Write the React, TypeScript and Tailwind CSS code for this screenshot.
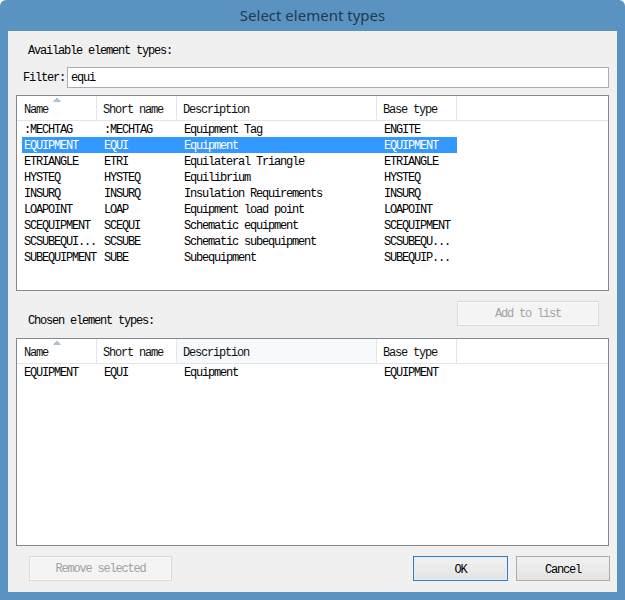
import React from "react";

type Row = { name: string; short: string; desc: string; base: string };

const available: Row[] = [
  { name: ":MECHTAG", short: ":MECHTAG", desc: "Equipment Tag", base: "ENGITE" },
  { name: "EQUIPMENT", short: "EQUI", desc: "Equipment", base: "EQUIPMENT" },
  { name: "ETRIANGLE", short: "ETRI", desc: "Equilateral Triangle", base: "ETRIANGLE" },
  { name: "HYSTEQ", short: "HYSTEQ", desc: "Equilibrium", base: "HYSTEQ" },
  { name: "INSURQ", short: "INSURQ", desc: "Insulation Requirements", base: "INSURQ" },
  { name: "LOAPOINT", short: "LOAP", desc: "Equipment load point", base: "LOAPOINT" },
  { name: "SCEQUIPMENT", short: "SCEQUI", desc: "Schematic equipment", base: "SCEQUIPMENT" },
  { name: "SCSUBEQUI...", short: "SCSUBE", desc: "Schematic subequipment", base: "SCSUBEQU..." },
  { name: "SUBEQUIPMENT", short: "SUBE", desc: "Subequipment", base: "SUBEQUIP..." },
];

const chosen: Row[] = [{ name: "EQUIPMENT", short: "EQUI", desc: "Equipment", base: "EQUIPMENT" }];

// little sort arrow drawn over the Name header
function SortArrow() {
  return (
    <svg className="absolute left-[36px] top-[1px]" width="8" height="5" viewBox="0 0 8 5">
      <path d="M0.5 4.5 L4 1 L7.5 4.5 Z" fill="#b4c2d2" stroke="#9aabbf" strokeWidth="0.6" />
    </svg>
  );
}

function ListView({
  rows,
  selected,
  height,
  hotCol,
}: {
  rows: Row[];
  selected?: number;
  height: string;
  hotCol?: boolean;
}) {
  return (
    <div className={`mx-[8px] ${height} shrink-0 border border-[#828790] bg-white`}>
      <div className="flex h-[25px] border-b border-[#e5e5e5] text-[#111]">
        <div className="relative flex w-[80px] items-center border-r border-[#e5e5e5] pl-[7px] pt-[3px]">
          <SortArrow />
          Name
        </div>
        <div className="flex w-[80px] items-center border-r border-[#e5e5e5] pl-[6px] pt-[3px]">Short name</div>
        <div
          className={`flex w-[200px] items-center border-r border-[#e5e5e5] pl-[6px] pt-[3px] ${
            hotCol ? "bg-[#f7fafd]" : ""
          }`}
        >
          Description
        </div>
        <div className="flex w-[80px] items-center border-r border-[#e5e5e5] pl-[6px] pt-[3px]">Base type</div>
      </div>
      <div className="flex flex-col">
        {rows.map((r, i) => {
          const sel = i === selected;
          return (
            <div
              key={r.name}
              className={`ml-[5px] flex h-[16px] w-[435px] items-center whitespace-nowrap pt-[1px] ${
                sel ? "bg-[#3399ff] text-white" : "text-black"
              }`}
            >
              <div className="w-[75px] pl-[2px]">{r.name}</div>
              <div className="w-[80px] pl-[7px]">{r.short}</div>
              <div className="w-[200px] pl-[7px]">{r.desc}</div>
              <div className="w-[80px] pl-[7px]">{r.base}</div>
            </div>
          );
        })}
      </div>
    </div>
  );
}

export default function App() {
  return (
    <div
      className="flex h-[600px] w-[625px] flex-col rounded-t-[6px] bg-[#5a93c1] text-[12px] tracking-[-1.2px]"
      style={{ fontFamily: '"Liberation Mono", monospace' }}
    >
      {/* title bar */}
      <div
        className="flex h-[31px] shrink-0 items-center justify-center text-[15px] tracking-normal text-[#1d3a55]"
        style={{ fontFamily: '"Noto Sans", "Open Sans", sans-serif' }}
      >
        Select element types
      </div>

      <div className="mx-[8px] flex h-[561px] shrink-0 flex-col bg-[#f0f0f0]">
        <div className="mt-[12px] h-[16px] pl-[20px] leading-[16px] text-black">Available element types:</div>

        <div className="mt-[8px] flex h-[21px] shrink-0 items-center">
          <span className="w-[59px] pl-[15px] pt-[1px] text-black">Filter:</span>
          <div className="flex h-[21px] w-[542px] items-center border border-[#abadb3] bg-white pl-[3px] text-black">
            equi
          </div>
        </div>

        <div className="mt-[7px]">
          <ListView rows={available} selected={1} height="h-[196px]" />
        </div>

        <div className="flex h-[47px] shrink-0 items-start">
          <span className="mt-[22px] h-[16px] pl-[20px] leading-[16px] text-black">Chosen element types:</span>
          <button className="ml-auto mr-[18px] mt-[10px] flex h-[25px] w-[142px] items-center justify-center border border-[#d9d9d9] bg-[#f4f4f4] text-[#a2a2a2] shadow-[inset_0_0_0_1px_#fafafa]">
            Add to list
          </button>
        </div>

        <ListView rows={chosen} height="h-[208px]" hotCol />

        <div className="mt-[10px] flex h-[25px] shrink-0">
          <button className="ml-[21px] flex h-[25px] w-[143px] items-center justify-center border border-[#d9d9d9] bg-[#f4f4f4] text-[#a2a2a2] shadow-[inset_0_0_0_1px_#fafafa]">
            Remove selected
          </button>
          <button className="ml-auto flex h-[25px] w-[95px] items-center justify-center border border-[#3c7fb1] bg-gradient-to-b from-[#f2f2f2] to-[#e3e3e3] pt-[2px] text-black shadow-[inset_0_0_0_1px_#dcecfc]">
            OK
          </button>
          <button className="ml-[8px] mr-[7px] flex h-[25px] w-[94px] items-center justify-center border border-[#acacac] bg-gradient-to-b from-[#f2f2f2] to-[#e3e3e3] pt-[2px] text-black">
            Cancel
          </button>
        </div>
      </div>
    </div>
  );
}
